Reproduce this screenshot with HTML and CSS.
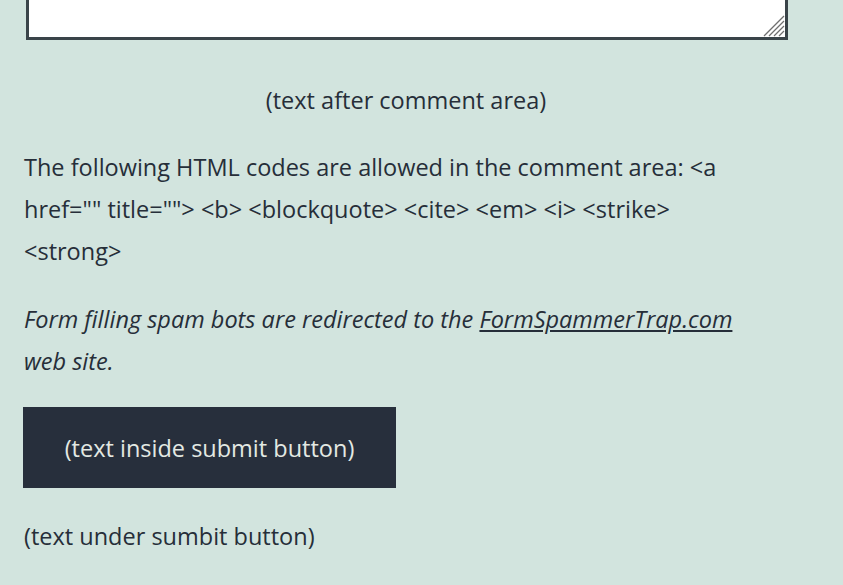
FILE: index.html
```html
<!DOCTYPE html>
<html lang="en">
<head>
  <meta charset="UTF-8" />
  <meta name="viewport" content="width=device-width, initial-scale=1.0" />
  <title>Leave a comment</title>
  <link rel="stylesheet" href="styles.css">
</head>
<body>
  <form class="comment-form">
    <div class="comment-wrap">
      <textarea class="comment-box" name="comment"></textarea>
      <svg class="grip" width="22" height="22" viewBox="0 0 22 22">
        <g stroke="#6f6f6f" stroke-width="1.3">
          <line x1="1" y1="21" x2="21" y2="1" />
          <line x1="6" y1="21" x2="21" y2="6" />
          <line x1="11" y1="21" x2="21" y2="11" />
          <line x1="16" y1="21" x2="21" y2="16" />
        </g>
      </svg>
    </div>
    <p class="after-area">(text after comment area)</p>
    <p class="allowed">The following HTML codes are allowed in the comment area: &lt;a href="" title=""&gt; &lt;b&gt; &lt;blockquote&gt; &lt;cite&gt; &lt;em&gt; &lt;i&gt; &lt;strike&gt; &lt;strong&gt;</p>
    <p class="spam-note">Form filling spam bots are redirected to the <a href="#">FormSpammerTrap.com</a> web site.</p>
    <button type="submit" class="submit-btn">(text inside submit button)</button>
    <p class="under-btn">(text under sumbit button)</p>
  </form>
</body>
</html>
```

FILE: styles.css
```css
body {
  margin: 0;
  background: #d2e4de;
  color: #262e39;
  font-family: 'Open Sans', sans-serif;
  font-size: 23.5px;
}
.comment-form {
  width: 764px;
  padding: 0 24px;
}
.comment-wrap {
  position: relative;
  width: 762px;
  margin-left: 2px;
}
.comment-box {
  display: block;
  box-sizing: border-box;
  width: 100%;
  height: 40px;
  margin: 0;
  border: 3px solid #3a4449;
  border-top: none;
  background: #fff;
  resize: none;
}
.grip {
  position: absolute;
  right: 3px;
  bottom: 3px;
}
.comment-form p {
  margin: 0;
  line-height: 42px;
}
.after-area {
  text-align: center;
  margin-top: 39px !important;
}
.allowed,
.spam-note {
  max-width: 740px;
}
.allowed {
  margin-top: 25px !important;
}
.spam-note {
  font-style: italic;
  margin-top: 26px !important;
}
.spam-note a {
  color: inherit;
}
.submit-btn {
  display: block;
  margin-top: 25px;
  width: 373px;
  height: 81px;
  border: none;
  background: #272f3c;
  color: #e3e9e3;
  font-family: inherit;
  font-size: 23.5px;
  margin-left: -1px;
  cursor: pointer;
}
.under-btn {
  margin-top: 27px !important;
}
```
